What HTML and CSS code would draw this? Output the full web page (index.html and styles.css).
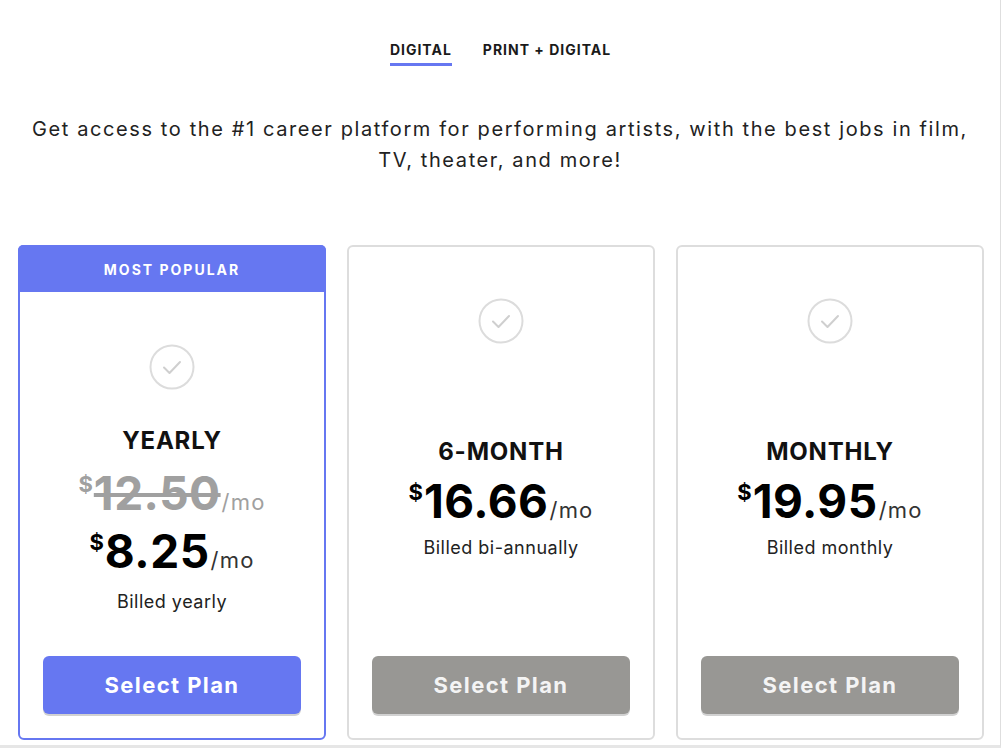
FILE: index.html
```html
<!DOCTYPE html>
<html lang="en">
<head>
<meta charset="utf-8">
<link rel="stylesheet" href="styles.css">
</head>
<body>
<div class="page">
  <nav class="tabs">
    <span class="tab active">DIGITAL</span>
    <span class="tab">PRINT + DIGITAL</span>
  </nav>
  <p class="intro">Get access to the #1 career platform for performing artists, with the best jobs in film, TV, theater, and more!</p>
  <div class="plans">
    <div class="card featured">
      <div class="badge">MOST POPULAR</div>
      <div class="card-body">
        <svg class="check" width="46" height="46" viewBox="0 0 46 46"><circle cx="23" cy="23" r="21.5" fill="none" stroke="#dcdcdc" stroke-width="2"/><path d="M15 23.5 L20.5 29 L31 18" fill="none" stroke="#cfcfcf" stroke-width="2" stroke-linecap="round" stroke-linejoin="round"/></svg>
        <div class="info">
          <div class="name">YEARLY</div>
          <div class="price old"><sup>$</sup><span class="amt">12.50</span><span class="per">/mo</span></div>
          <div class="price"><sup>$</sup><span class="amt">8.25</span><span class="per">/mo</span></div>
          <div class="billed">Billed yearly</div>
        </div>
        <button class="btn">Select Plan</button>
      </div>
    </div>
    <div class="card">
      <div class="card-body">
        <svg class="check" width="46" height="46" viewBox="0 0 46 46"><circle cx="23" cy="23" r="21.5" fill="none" stroke="#dcdcdc" stroke-width="2"/><path d="M15 23.5 L20.5 29 L31 18" fill="none" stroke="#cfcfcf" stroke-width="2" stroke-linecap="round" stroke-linejoin="round"/></svg>
        <div class="info">
          <div class="name">6-MONTH</div>
          <div class="price"><sup>$</sup><span class="amt">16.66</span><span class="per">/mo</span></div>
          <div class="billed">Billed bi-annually</div>
        </div>
        <button class="btn gray">Select Plan</button>
      </div>
    </div>
    <div class="card">
      <div class="card-body">
        <svg class="check" width="46" height="46" viewBox="0 0 46 46"><circle cx="23" cy="23" r="21.5" fill="none" stroke="#dcdcdc" stroke-width="2"/><path d="M15 23.5 L20.5 29 L31 18" fill="none" stroke="#cfcfcf" stroke-width="2" stroke-linecap="round" stroke-linejoin="round"/></svg>
        <div class="info">
          <div class="name">MONTHLY</div>
          <div class="price"><sup>$</sup><span class="amt">19.95</span><span class="per">/mo</span></div>
          <div class="billed">Billed monthly</div>
        </div>
        <button class="btn gray">Select Plan</button>
      </div>
    </div>
  </div>
</div>
</body>
</html>
```

FILE: styles.css
```css
* { box-sizing: border-box; }
html, body { margin: 0; padding: 0; background: #fff; }
body { font-family: Inter, "Noto Sans", sans-serif; color: #1a1a1a; }

.page {
  width: 1001px;
  height: 748px;
  border-right: 1px solid #dedede;
  border-bottom: 3px solid #e6e6e6;
  padding: 0 18px;
  overflow: hidden;
}

.tabs {
  display: flex;
  justify-content: center;
  gap: 31px;
  padding-top: 41px;
  margin-left: 1px;
}
.tab {
  font-size: 14px;
  font-weight: 700;
  letter-spacing: 1px;
  color: #1a1a1a;
  line-height: 17px;
  padding-bottom: 5px;
  border-bottom: 3px solid transparent;
}
.tab.active { border-bottom-color: #6677f1; }

.intro {
  margin: 48px auto 0;
  text-align: center;
  font-size: 20px;
  letter-spacing: 1.6px;
  line-height: 31px;
  color: #222;
  max-width: 960px;
}

.plans {
  display: grid;
  grid-template-columns: repeat(3, 308px);
  gap: 21px;
  margin-top: 69px;
}

.card {
  height: 495px;
  border: 2px solid #dddddd;
  border-radius: 6px;
  display: flex;
  flex-direction: column;
  background: #fff;
}
.card.featured { border-color: #6677f1; }

.badge {
  background: #6677f1;
  color: #fff;
  font-size: 14px;
  font-weight: 700;
  letter-spacing: 2px;
  text-align: center;
  height: 47px;
  line-height: 49px;
  margin: -2px -2px 0;
  border-radius: 5px 5px 0 0;
}

.card-body {
  flex: 1;
  display: flex;
  flex-direction: column;
  align-items: center;
  padding: 51px 23px 24px;
}
.featured .card-body { padding-top: 52px; }

.check { display: block; flex: none; }

.info {
  margin: auto 0;
  padding-bottom: 3px;
  text-align: center;
  display: flex;
  flex-direction: column;
  align-items: center;
}
.featured .info { padding-bottom: 6px; }

.name {
  font-size: 24px;
  font-weight: 700;
  letter-spacing: 0.8px;
  line-height: 30px;
  color: #111;
  margin-bottom: 7px;
}

.price {
  display: flex;
  align-items: baseline;
  color: #000;
  line-height: 54px;
}
.price.old { margin-top: 3px; margin-bottom: -5px; }
.price sup {
  font-size: 22px;
  font-weight: 700;
  align-self: flex-start;
  line-height: 1;
  margin-top: 7px;
  margin-right: 1px;
}
.price .amt {
  font-size: 46px;
  font-weight: 700;
  letter-spacing: 0.5px;
}
.price .per {
  font-size: 22px;
  font-weight: 400;
  letter-spacing: 1.2px;
  color: #333;
  margin-left: 1px;
}
.price.old { color: #a0a0a0; }
.price.old .per { color: #a0a0a0; }
.price.old .amt { text-decoration: line-through; text-decoration-thickness: 4px; }

.billed {
  font-size: 18px;
  letter-spacing: 0.5px;
  color: #222;
  line-height: 24px;
  margin-top: -1px;
}
.featured .billed { margin-top: 3px; }

.btn {
  width: 258px;
  height: 58px;
  border: none;
  border-radius: 6px;
  background: #6677f1;
  color: #fff;
  font-family: inherit;
  font-size: 22px;
  font-weight: 700;
  letter-spacing: 1.4px;
  box-shadow: 0 2px 0 rgba(0,0,0,0.18);
  flex: none;
}
.btn.gray { background: #989794; color: #f4f4f4; }
```
